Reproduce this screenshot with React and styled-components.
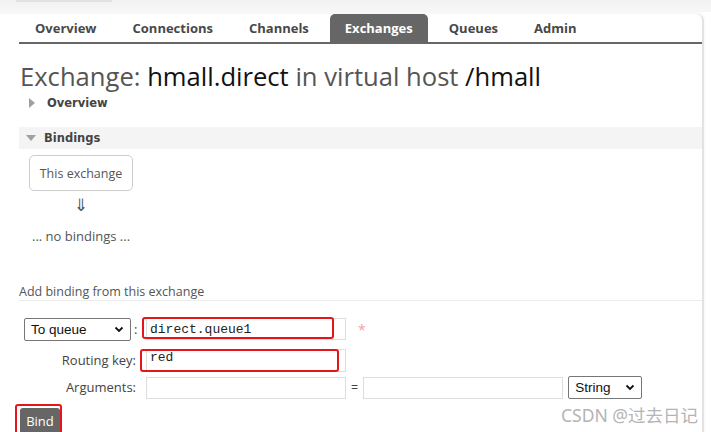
import React from 'react';
import styled, { createGlobalStyle } from 'styled-components';

const GlobalStyle = createGlobalStyle`
  html, body {
    margin: 0;
    padding: 0;
    background: #ffffff;
  }
  body {
    font-family: "Open Sans", "DejaVu Sans", sans-serif;
    color: #484848;
    overflow: hidden;
  }
`;

const StTopShade = styled.div`
  height: 12px;
  background: linear-gradient(#f1f1f1, #f7f7f7);
  display: flex;
  padding-left: 16px;
`;

const StTopTab = styled.div`
  width: 96px;
  height: 2px;
  background-color: #e2e2e2;
`;

const StPanel = styled.div`
  width: 704px;
  height: 420px;
  background: #ffffff;
  border-right: 2px solid #e3e3e3;
  border-top-right-radius: 7px;
  box-shadow: 0 -1px 3px rgba(0, 0, 0, 0.06);
  padding-left: 19px;
  box-sizing: border-box;
`;

const StNav = styled.ul`
  list-style: none;
  margin: 2px 0 0 0;
  padding: 0 0 0 1px;
  display: flex;
  gap: 6px;
  border-bottom: 2px solid #666666;
`;

const StTab = styled.li`
  height: 28px;
  padding: 0 15px;
  display: flex;
  align-items: center;
  font-family: "Open Sans", sans-serif;
  font-weight: 700;
  font-size: 13px;
  color: ${(p) => (p.$active ? '#ffffff' : '#484848')};
  background-color: ${(p) => (p.$active ? '#666666' : 'transparent')};
  border-radius: 5px 5px 0 0;
`;

const StHeading = styled.h1`
  margin: 18px 0 0 1px;
  font-family: "Open Sans", sans-serif;
  font-weight: 400;
  font-size: 25.6px;
  line-height: 30px;
  color: #555555;
  white-space: nowrap;
`;

const StName = styled.span`
  color: #111111;
`;

const StToggle = styled.div`
  display: flex;
  align-items: center;
  gap: 8px;
  height: 22px;
  padding-left: ${(p) => (p.$open ? '7px' : '10px')};
  margin-top: ${(p) => p.$top || '0'};
  background-color: ${(p) => (p.$open ? '#f4f4f4' : 'transparent')};
  font-family: "DejaVu Sans", Verdana, sans-serif;
  font-weight: 700;
  font-size: 11.5px;
  color: #444444;
`;

const StTriangle = styled.span`
  width: 0;
  height: 0;
  ${(p) =>
    p.$open
      ? `
    border-left: 5px solid transparent;
    border-right: 5px solid transparent;
    border-top: 6px solid #a0a0a0;
  `
      : `
    border-top: 5px solid transparent;
    border-bottom: 5px solid transparent;
    border-left: 6px solid #a0a0a0;
    margin-right: 4px;
  `}
`;

const StBindings = styled.div`
  display: flex;
  flex-direction: column;
  align-items: flex-start;
  padding: 6px 0 0 10px;
`;

const StExchangeBox = styled.div`
  width: 104px;
  height: 36px;
  box-sizing: border-box;
  border: 1px solid #cccccc;
  border-radius: 5px;
  display: flex;
  align-items: center;
  justify-content: center;
  font-size: 12.5px;
  color: #555555;
`;

const StArrow = styled.div`
  width: 104px;
  text-align: center;
  font-family: "DejaVu Sans", sans-serif;
  font-size: 17px;
  line-height: 22px;
  margin-top: 3px;
  color: #555555;
`;

const StEmpty = styled.div`
  margin: 11px 0 0 3px;
  font-size: 13px;
  color: #555555;
`;

const StFormTitle = styled.div`
  margin-top: 39px;
  line-height: 16px;
  border-bottom: 1px solid #ececec;
  font-size: 12.5px;
  color: #555555;
`;

const StForm = styled.div`
  display: grid;
  grid-template-columns: 123px auto;
  grid-template-rows: 31px 27px 22px;
  column-gap: 4px;
  margin-top: 17px;
  align-items: start;
`;

const StLabel = styled.div`
  height: 22px;
  display: flex;
  align-items: center;
  justify-content: ${(p) => (p.$start ? 'flex-start' : 'flex-end')};
  gap: 3px;
  padding-right: ${(p) => p.$pad || '0'};
  padding-left: ${(p) => (p.$start ? '5px' : '0')};
  font-size: 13px;
  color: #444444;
`;

const StSelect = styled.div`
  height: 23px;
  width: ${(p) => p.$width};
  box-sizing: border-box;
  border: 1px solid #767676;
  border-radius: 2px;
  padding: 0 6px;
  display: flex;
  align-items: center;
  justify-content: space-between;
  font-family: "Liberation Sans", Arial, sans-serif;
  font-size: 13.5px;
  color: #111111;
  background: #ffffff;
`;

const StFieldRow = styled.div`
  display: flex;
  align-items: center;
  gap: ${(p) => p.$gap || '9px'};
`;

const StField = styled.div`
  position: relative;
  width: 200px;
  height: ${(p) => p.$height || '22px'};
  box-sizing: border-box;
  border: 1px solid #dddddd;
  padding: 0 3px;
  display: flex;
  align-items: ${(p) => (p.$top ? 'flex-start' : 'center')};
  font-family: "Liberation Mono", "Courier New", monospace;
  font-size: 13px;
  color: #222222;
`;

// red markers drawn over the filled-in fields
const StHighlight = styled.span`
  position: absolute;
  top: ${(p) => p.$top};
  bottom: ${(p) => p.$bottom};
  left: ${(p) => p.$left};
  right: ${(p) => p.$right};
  border: 2px solid #e8141c;
  border-radius: 3px;
  pointer-events: none;
`;

const StRequired = styled.span`
  color: #f3a0a6;
  font-size: 14px;
  margin-left: 2px;
`;

const StEquals = styled.span`
  font-size: 12.5px;
  color: #444444;
`;

const StFooter = styled.div`
  display: flex;
  align-items: flex-start;
  justify-content: space-between;
  margin-top: 10px;
`;

const StBind = styled.div`
  position: relative;
  margin-left: 1px;
  width: 40px;
  height: 28px;
  padding-bottom: 2px;
  box-sizing: border-box;
  background-color: #666666;
  border-radius: 3px 3px 0 0;
  display: flex;
  align-items: center;
  justify-content: center;
  font-size: 13px;
  color: #ffffff;
`;

const StWatermark = styled.div`
  margin: -5px 4px 0 0;
  line-height: 24px;
  font-family: "Noto Sans", "Noto Sans CJK SC", sans-serif;
  font-size: 17.5px;
  color: #b4b4b4;
`;

const Chevron = () => (
  <svg width="10" height="7" viewBox="0 0 10 7">
    <path d="M1.5 1.5 L5 5 L8.5 1.5" fill="none" stroke="#111" strokeWidth="1.8" />
  </svg>
);

const tabs = ['Overview', 'Connections', 'Channels', 'Exchanges', 'Queues', 'Admin'];

const App = () => {
  return (
    <>
      <GlobalStyle />
      <StTopShade>
        <StTopTab />
      </StTopShade>
      <StPanel>
        <StNav>
          {tabs.map((t) => (
            <StTab key={t} $active={t === 'Exchanges'}>
              {t}
            </StTab>
          ))}
        </StNav>

        <StHeading>
          Exchange: <StName>hmall.direct</StName> in virtual host <StName>/hmall</StName>
        </StHeading>

        <StToggle>
          <StTriangle />
          Overview
        </StToggle>

        <StToggle $open $top="13px">
          <StTriangle $open />
          Bindings
        </StToggle>

        <StBindings>
          <StExchangeBox>This exchange</StExchangeBox>
          <StArrow>⇓</StArrow>
          <StEmpty>... no bindings ...</StEmpty>
        </StBindings>

        <StFormTitle>Add binding from this exchange</StFormTitle>

        <StForm>
          <StLabel $start>
            <StSelect $width="107px">
              To queue
              <Chevron />
            </StSelect>
            :
          </StLabel>
          <StFieldRow $gap="10px">
            <StField>
              direct.queue1
              <StHighlight $top="-2px" $bottom="0px" $left="-5px" $right="11px" />
            </StField>
            <StRequired>*</StRequired>
          </StFieldRow>

          <StLabel $pad="6px">Routing key:</StLabel>
          <StFieldRow>
            <StField $height="23px" $top>
              red
              <StHighlight $top="-1px" $bottom="-1px" $left="-7px" $right="6px" />
            </StField>
          </StFieldRow>

          <StLabel $pad="6px">Arguments:</StLabel>
          <StFieldRow $gap="5px">
            <StField />
            <StEquals>=</StEquals>
            <StField />
            <StSelect $width="74px">
              String
              <Chevron />
            </StSelect>
          </StFieldRow>
        </StForm>

        <StFooter>
          <StBind>
            Bind
            <StHighlight $top="-4px" $bottom="-4px" $left="-5px" $right="-2px" />
          </StBind>
          <StWatermark>CSDN @过去日记</StWatermark>
        </StFooter>
      </StPanel>
    </>
  );
};

export default App;
